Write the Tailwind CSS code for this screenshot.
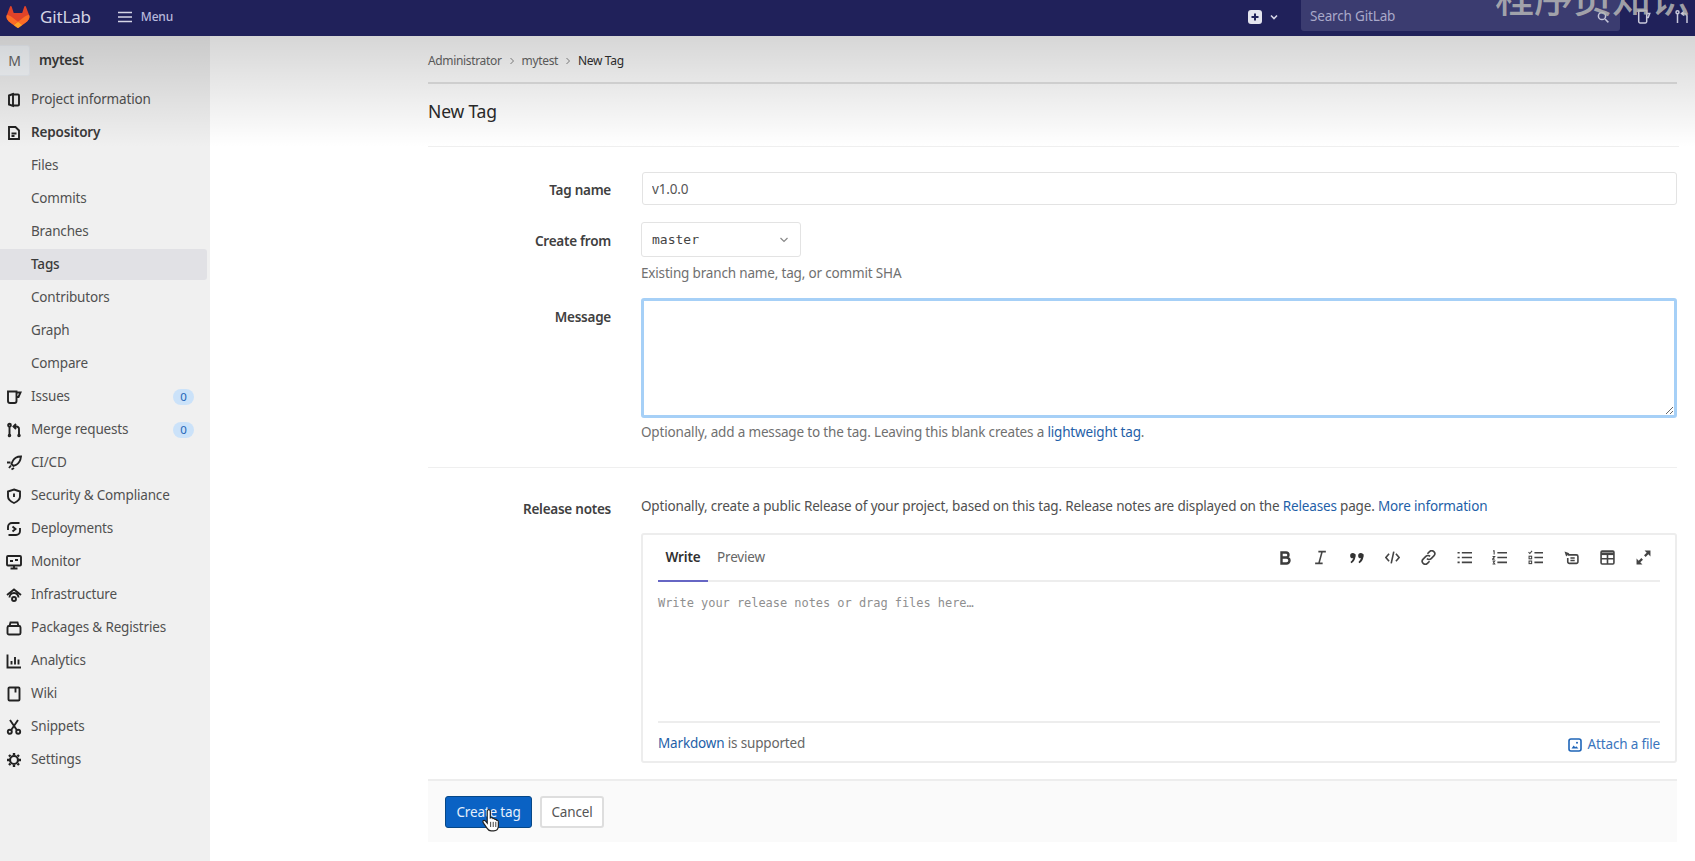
<!DOCTYPE html>
<html lang="en">
<head>
  <meta charset="UTF-8" />
  <title>New Tag · mytest · GitLab</title>
  <script src="https://cdn.jsdelivr.net/npm/@tailwindcss/browser@4"></script>
</head>
<body class="relative h-[861px] overflow-hidden bg-white font-['Noto_Sans',sans-serif] text-[13.5px] tracking-[-0.17px] text-[#505050]">

  <!-- top bar -->
  <header class="flex h-[36px] items-center bg-[#20215a] pb-[3px] pr-[5px] text-[#c6c6e0]">
    <svg class="ml-[6px] h-[22px] w-[24px]" viewBox="0 0 25 24">
      <path d="m24.507 9.5-.034-.09L21.082.562a.896.896 0 0 0-1.694.091l-2.29 7.01H7.825L5.535.653a.898.898 0 0 0-1.694-.09L.451 9.411.416 9.5a6.297 6.297 0 0 0 2.09 7.278l.012.01.03.022 5.16 3.867 2.56 1.935 1.554 1.176a1.051 1.051 0 0 0 1.268 0l1.555-1.176 2.56-1.935 5.197-3.89.014-.01A6.297 6.297 0 0 0 24.507 9.5Z" fill="#E24329"/>
      <path d="m24.507 9.5-.034-.09a11.44 11.44 0 0 0-4.56 2.051l-7.447 5.632 4.742 3.584 5.197-3.89.014-.01A6.297 6.297 0 0 0 24.507 9.5Z" fill="#FC6D26"/>
      <path d="m7.707 20.677 2.56 1.935 1.555 1.176a1.051 1.051 0 0 0 1.268 0l1.555-1.176 2.56-1.935-4.743-3.584-4.755 3.584Z" fill="#FCA326"/>
      <path d="M5.01 11.461a11.43 11.43 0 0 0-4.56-2.05L.416 9.5a6.297 6.297 0 0 0 2.09 7.278l.012.01.03.022 5.16 3.867 4.745-3.584-7.444-5.632Z" fill="#FC6D26"/>
    </svg>
    <span class="ml-[10px] text-[17px] leading-none text-[#d4d4e4]">GitLab</span>
    <svg class="ml-[27px] h-[14px] w-[14px]" viewBox="0 0 14 14" fill="none" stroke="#d6d6e6" stroke-width="1.4"><path d="M0 2.5h14M0 7h14M0 11.5h14"/></svg>
    <span class="ml-[9px] text-[12px] font-medium text-[#b9b9dc]">Menu</span>

    <div class="ml-auto flex h-full items-center">
      <svg class="h-[14px] w-[14px]" viewBox="0 0 14 14"><rect width="14" height="14" rx="3" fill="#e4e4ee"/><path d="M7 3.500v7M3.500 7h7" stroke="#20215a" stroke-width="2"/></svg>
      <svg class="ml-[8px] h-[8px] w-[8px]" viewBox="0 0 8 8" fill="none" stroke="#d6d6e6" stroke-width="1.6"><path d="M1 2.500l3 3 3-3"/></svg>
      <div class="ml-[23px] flex h-[31px] w-[319px] items-center justify-between self-start rounded-b-[3px] bg-[#3b3c70] pl-[9px] pr-[11px] pt-[2px] text-[13.5px] text-[#a9a9c9]">
        <span>Search GitLab</span>
        <svg class="h-[12px] w-[12px]" viewBox="0 0 12 12" fill="none" stroke="#c4c4d8" stroke-width="1.5"><circle cx="5" cy="5" r="3.600"/><path d="M8 8l3.400 3.400"/></svg>
      </div>
      <svg class="ml-[16px] h-[16px] w-[16px]" viewBox="0 0 16 16" fill="none" stroke="#c8c8da" stroke-width="1.5"><path d="M2.700 1.500v11a1.500 1.500 0 0 0 1.500 1.500h5a1.500 1.500 0 0 0 1.500-1.500v-11zM10.700 4.500h3l-1.500 4h-1.500"/></svg>
      <svg class="ml-[22px] h-[16px] w-[16px] shrink-0" viewBox="0 0 16 16" fill="none" stroke="#c8c8da" stroke-width="1.5"><path d="M3.500 5v9M13 8v6M10 2.500L7.500 4.500 10 6.500M7.500 4.500h3A2.500 2.500 0 0 1 13 7v1"/><circle cx="3.500" cy="3.200" r="1.500"/></svg>
    </div>
  </header>

  <!-- soft grey fade lying over the top of the page -->
  <div class="pointer-events-none absolute inset-x-0 top-[36px] z-10 h-[111px] bg-linear-to-b from-black/16 to-transparent"></div>

  <!-- watermark -->
  <div class="absolute left-[1495px] top-[-29px] z-20 whitespace-nowrap font-['Noto_Sans_CJK_SC',sans-serif] text-[39px] font-medium leading-[48px] tracking-normal text-[#b5b5b5]/85">程序员知识</div>

  <div class="flex h-[825px]">
    <!-- sidebar -->
    <aside class="w-[210px] shrink-0 bg-[#f0f0f0] pt-[9px]">
      <div class="flex h-[31px] items-center">
        <div class="flex h-[31px] w-[30px] items-center justify-center rounded-r-[3px] border border-l-0 border-[#f0f4f9] bg-[#f9fcff] text-[14px] text-[#666]">M</div>
        <span class="ml-[9px] text-[13.5px] font-semibold text-[#3a3a3a]">mytest</span>
      </div>
      <nav class="mt-[7px] w-[207px]">
        <a class="flex h-[33px] items-center">
          <svg class="ml-[6px] h-[16px] w-[16px] shrink-0" viewBox="0 0 16 16" fill="none" stroke="#222" stroke-width="1.9"><path d="M7 2L3 3.500v9L7 14zM7 2.500h5a1 1 0 0 1 1 1v9a1 1 0 0 1-1 1H7"/></svg>
          <span class="ml-[9px]">Project information</span>
        </a>
        <a class="flex h-[33px] items-center font-semibold text-[#3a3a3a]">
          <svg class="ml-[6px] h-[16px] w-[16px] shrink-0" viewBox="0 0 16 16" fill="none" stroke="#222" stroke-width="1.9"><path d="M3 2h6.500L13 5.500V14H3zM5.500 8.500h5M5.500 11h3"/></svg>
          <span class="ml-[9px]">Repository</span>
        </a>
        <a class="flex h-[33px] items-center pl-[31px]">Files</a>
        <a class="flex h-[33px] items-center pl-[31px]">Commits</a>
        <a class="flex h-[33px] items-center pl-[31px]">Branches</a>
        <a class="my-px flex h-[31px] items-center rounded-r-[3px] bg-[#e1e1e5] pl-[31px] font-medium text-[#3a3a3a]">Tags</a>
        <a class="flex h-[33px] items-center pl-[31px]">Contributors</a>
        <a class="flex h-[33px] items-center pl-[31px]">Graph</a>
        <a class="flex h-[33px] items-center pl-[31px]">Compare</a>
        <a class="flex h-[33px] items-center">
          <svg class="ml-[6px] h-[16px] w-[16px] shrink-0" viewBox="0 0 16 16" fill="none" stroke="#222" stroke-width="1.9"><path d="M2 2.500h8.500V12a2 2 0 0 1-2 2H4a2 2 0 0 1-2-2zM10.500 3.500h4l-2 4.500h-2"/></svg>
          <span class="ml-[9px]">Issues</span>
          <span class="ml-auto mr-[13px] flex h-[16px] w-[21px] items-center justify-center rounded-full bg-[#cbe2f9] text-[11.5px] text-[#1f65b8]">0</span>
        </a>
        <a class="flex h-[33px] items-center">
          <svg class="ml-[6px] h-[16px] w-[16px] shrink-0" viewBox="0 0 16 16" fill="none" stroke="#222" stroke-width="1.9"><path d="M3.500 5v8M13 8v5M10 2L7.500 4.500 10 7M7.500 4.500h3A2.500 2.500 0 0 1 13 7v1"/><circle cx="3.500" cy="3.200" r="1.400"/><circle cx="3.500" cy="13.500" r="0.800"/><circle cx="13" cy="13.500" r="0.800"/></svg>
          <span class="ml-[9px]">Merge requests</span>
          <span class="ml-auto mr-[13px] flex h-[16px] w-[21px] items-center justify-center rounded-full bg-[#cbe2f9] text-[11.5px] text-[#1f65b8]">0</span>
        </a>
        <a class="flex h-[33px] items-center">
          <svg class="ml-[6px] h-[16px] w-[16px] shrink-0" viewBox="0 0 16 16" fill="none" stroke="#222" stroke-width="1.9"><path d="M15 1.500c-4 0-7 1.500-8.500 5L5.500 9l2 2 2.500-1c3-1.500 4.500-4.500 5-8.500zM1 7.500h3.500M5.500 14.500l2.500-1.500M5 10.500L3 13"/></svg>
          <span class="ml-[9px]">CI/CD</span>
        </a>
        <a class="flex h-[33px] items-center">
          <svg class="ml-[6px] h-[16px] w-[16px] shrink-0" viewBox="0 0 16 16" fill="none" stroke="#222" stroke-width="1.9"><path d="M8 1.500l6 2v5c0 3-2.500 5-6 6.500-3.500-1.500-6-3.500-6-6.500v-5zM8 5.500v3.500"/></svg>
          <span class="ml-[9px]">Security &amp; Compliance</span>
        </a>
        <a class="flex h-[33px] items-center">
          <svg class="ml-[6px] h-[16px] w-[16px] shrink-0" viewBox="0 0 16 16" fill="none" stroke="#222" stroke-width="1.9"><path d="M2 9V6a4 4 0 0 1 4-4h7.500M14 7v3a4 4 0 0 1-4 4H2.500M6.500 5.500L9.500 8l-3 2.500"/></svg>
          <span class="ml-[9px]">Deployments</span>
        </a>
        <a class="flex h-[33px] items-center">
          <svg class="ml-[6px] h-[16px] w-[16px] shrink-0" viewBox="0 0 16 16" fill="none" stroke="#222" stroke-width="1.9"><rect x="1" y="2" width="14" height="9.500" rx="1"/><path d="M4.500 14.500h7M8 11.500v3M4 7h3M9 6h3"/></svg>
          <span class="ml-[9px]">Monitor</span>
        </a>
        <a class="flex h-[33px] items-center">
          <svg class="ml-[6px] h-[16px] w-[16px] shrink-0" viewBox="0 0 16 16" fill="none" stroke="#222" stroke-width="1.9"><path d="M1 8l7-5.500L15 8M3.500 10.500a4.500 4.500 0 0 1 9 0"/><circle cx="8" cy="12" r="2"/></svg>
          <span class="ml-[9px]">Infrastructure</span>
        </a>
        <a class="flex h-[33px] items-center">
          <svg class="ml-[6px] h-[16px] w-[16px] shrink-0" viewBox="0 0 16 16" fill="none" stroke="#222" stroke-width="1.9"><rect x="1.500" y="6" width="13" height="8.500" rx="1.500"/><path d="M3.500 6l1-3.500h7l1 3.500"/></svg>
          <span class="ml-[9px]">Packages &amp; Registries</span>
        </a>
        <a class="flex h-[33px] items-center">
          <svg class="ml-[6px] h-[16px] w-[16px] shrink-0" viewBox="0 0 16 16" fill="none" stroke="#222" stroke-width="1.9"><path d="M1.500 1.500V14.500H15M5.500 8v3.500M9 4v7.500M12.500 6.500v5"/></svg>
          <span class="ml-[9px]">Analytics</span>
        </a>
        <a class="flex h-[33px] items-center">
          <svg class="ml-[6px] h-[16px] w-[16px] shrink-0" viewBox="0 0 16 16" fill="none" stroke="#222" stroke-width="1.9"><rect x="2.500" y="1.500" width="11" height="13" rx="1"/><path d="M9.500 1.500v5"/></svg>
          <span class="ml-[9px]">Wiki</span>
        </a>
        <a class="flex h-[33px] items-center">
          <svg class="ml-[6px] h-[16px] w-[16px] shrink-0" viewBox="0 0 16 16" fill="none" stroke="#222" stroke-width="1.9"><circle cx="3.800" cy="12.800" r="2"/><circle cx="12.200" cy="12.800" r="2"/><path d="M4 1l6.800 10M12 1L5.200 11"/></svg>
          <span class="ml-[9px]">Snippets</span>
        </a>
        <a class="flex h-[33px] items-center">
          <svg class="ml-[6px] h-[16px] w-[16px] shrink-0" viewBox="0 0 16 16" fill="none" stroke="#222" stroke-width="2.200"><circle cx="8" cy="8" r="4"/><path stroke-width="2.400" d="M8 1v2M8 13v2M1 8h2M13 8h2M3 3l1.400 1.400M11.600 11.600L13 13M3 13l1.400-1.400M11.600 4.400L13 3"/></svg>
          <span class="ml-[9px]">Settings</span>
        </a>
      </nav>
    </aside>

    <!-- page -->
    <main class="min-w-0 flex-1 pl-[218px] pr-[18px]">
      <div class="flex h-[48px] items-center border-b-2 border-[#e3e3e3] pt-[4px] text-[12px] tracking-[-0.34px] text-[#666]">
        <span>Administrator</span>
        <svg class="mx-[6px] h-[8px] w-[8px]" viewBox="0 0 8 8" fill="none" stroke="#888" stroke-width="1"><path d="M2.500 1l3 3-3 3"/></svg>
        <span>mytest</span>
        <svg class="mx-[6px] h-[8px] w-[8px]" viewBox="0 0 8 8" fill="none" stroke="#888" stroke-width="1"><path d="M2.500 1l3 3-3 3"/></svg>
        <span class="text-[#303030]">New Tag</span>
      </div>
      <div class="mr-[-2px] flex h-[63px] items-center border-b border-[#efefef] pb-[8px]">
        <h1 class="text-[17.5px] font-normal text-[#2a2a2a]">New Tag</h1>
      </div>

      <form class="grid grid-cols-[183px_1fr] gap-x-[30px] pt-[25px]">
        <label class="flex h-[33px] items-center justify-end pt-[4px] font-semibold tracking-[-0.25px] text-[#404040]">Tag name</label>
        <input class="ml-px h-[33px] rounded-[3px] border border-[#e3e3e3] px-[9px] text-[13.5px] text-[#555] outline-none" value="v1.0.0" />

        <label class="mt-[17px] flex h-[35px] items-center justify-end pt-[3px] font-semibold tracking-[-0.25px] text-[#404040]">Create from</label>
        <div class="mt-[17px]">
          <div class="flex h-[35px] w-[160px] items-center justify-between rounded-[3px] border border-[#e3e3e3] pl-[10px] pr-[11px] font-['DejaVu_Sans_Mono',monospace] text-[13px] tracking-normal text-[#444]">
            <span>master</span>
            <svg class="h-[10px] w-[10px]" viewBox="0 0 10 10" fill="none" stroke="#888" stroke-width="1.200"><path d="M1.500 3l3.500 3.500L8.500 3"/></svg>
          </div>
          <p class="mt-[6px] leading-[20px] text-[#707070]">Existing branch name, tag, or commit SHA</p>
        </div>

        <label class="mt-[15px] flex h-[38px] items-center justify-end font-semibold tracking-[-0.25px] text-[#404040]">Message</label>
        <div class="mt-[15px]">
          <textarea class="block h-[120px] w-full resize-y rounded-[3px] border-[3px] border-[#a6d0f7] outline-none"></textarea>
          <p class="mt-[4px] leading-[20px] text-[#707070]">Optionally, add a message to the tag. Leaving this blank creates a <a class="text-[#1f5fa8]">lightweight tag</a>.</p>
        </div>

        <div class="col-span-2 mt-[25px] border-b border-[#efefef]"></div>

        <label class="mt-[31px] flex h-[20px] items-center justify-end font-semibold tracking-[-0.25px] text-[#404040]">Release notes</label>
        <div class="mt-[28px]">
          <p class="leading-[20px] text-[#505050]">Optionally, create a public Release of your project, based on this tag. Release notes are displayed on the <a class="text-[#1f5fa8]">Releases</a> page. <a class="text-[#1f5fa8]">More information</a></p>

          <div class="mt-[17px] h-[230px] rounded-[3px] border-2 border-[#ededed] px-[15px]">
            <div class="flex h-[47px] items-center justify-between border-b-2 border-[#ededed]">
              <div class="flex h-full">
                <span class="-mb-[2px] flex h-[47px] w-[50px] items-center justify-center border-b-2 border-[#6666c4] font-semibold text-[#303030]">Write</span>
                <span class="ml-[9px] flex items-center text-[#666]">Preview</span>
              </div>
              <div class="-mr-[1px] flex items-center">
                <span class="flex w-[35.8px] justify-center"><svg class="h-[14px] w-[14px]" viewBox="0 0 14 14" fill="none" stroke="#3c3c3c" stroke-width="2.400"><path d="M3.500 1.500h4.500a2.500 2.500 0 0 1 0 5H3.500zM3.500 6.500h5a2.700 2.700 0 0 1 0 6h-5z"/></svg></span>
                <span class="flex w-[35.8px] justify-center"><svg class="h-[15px] w-[15px]" viewBox="0 0 14 14" fill="none" stroke="#444" stroke-width="1.500"><path d="M5 1.500h7M2 12.500h7M8.500 1.500l-3 11"/></svg></span>
                <span class="flex w-[35.8px] justify-center"><svg class="h-[16px] w-[16px]" viewBox="0 0 14 14" fill="#333"><circle cx="3.300" cy="5" r="2.300"/><circle cx="10.300" cy="5" r="2.300"/><path d="M4.100 3.500h1.500c.4 4-1 6.500-3.500 8l-.8-1.100C3.300 9 4.400 7 4.100 3.500zM11.100 3.500h1.500c.4 4-1 6.500-3.500 8l-.8-1.100c1.500-1.400 3-3.400 2.800-6.900z"/></svg></span>
                <span class="flex w-[35.8px] justify-center"><svg class="h-[15px] w-[15px]" viewBox="0 0 14 14" fill="none" stroke="#444" stroke-width="1.500"><path d="M3.800 3.500L.8 7l3 3.500M10.200 3.500l3 3.500-3 3.500M8.200 1.500l-2.400 11"/></svg></span>
                <span class="flex w-[35.8px] justify-center"><svg class="h-[15px] w-[15px]" viewBox="0 0 14 14" fill="none" stroke="#444" stroke-width="1.500"><path d="M6 3.500l2-2a2.800 2.800 0 0 1 4 4l-2.500 2.500a2.800 2.800 0 0 1-4 0M8 10.500l-2 2a2.800 2.800 0 0 1-4-4L4.500 6a2.800 2.800 0 0 1 4 0"/></svg></span>
                <span class="flex w-[35.8px] justify-center"><svg class="h-[15px] w-[15px]" viewBox="0 0 14 14" fill="none" stroke="#444" stroke-width="1.500"><path d="M4.500 2.500H14M4.500 7H14M4.500 11.500H14M.5 2.500h2M.5 7h2M.5 11.500h2"/></svg></span>
                <span class="flex w-[35.8px] justify-center"><svg class="h-[15px] w-[15px]" viewBox="0 0 14 14" fill="none" stroke="#444" stroke-width="1.500"><path d="M5 2.500h9M5 7h9M5 11.500h9"/><path stroke-width="1" d="M1 .8h1v3.400M.5 6h2L.5 8.500h2M.5 10.200h2L1.500 11.500l1 1.500h-2"/></svg></span>
                <span class="flex w-[35.8px] justify-center"><svg class="h-[15px] w-[15px]" viewBox="0 0 14 14" fill="none" stroke="#444" stroke-width="1.500"><path d="M6 2.500h8M6 7h8M6 11.500h8"/><path stroke-width="1" d="M.5 2l1.200 1.300L3.800.8"/><rect x="1" y="5.800" width="2.400" height="2.400" stroke-width="1"/><rect x="1" y="10.300" width="2.400" height="2.400" stroke-width="1"/></svg></span>
                <span class="flex w-[35.8px] justify-center"><svg class="h-[15px] w-[15px]" viewBox="0 0 14 14" fill="none" stroke="#444" stroke-width="1.500"><path d="M3.500 4.500h8a1.500 1.500 0 0 1 1.500 1.500v5a1.500 1.500 0 0 1-1.500 1.500H5A1.500 1.500 0 0 1 3.500 11V7.500M6 7.500h4M6 9.800h4"/><path fill="#444" stroke="none" d="M.5 1.500l4.500 1.500-3 3z"/></svg></span>
                <span class="flex w-[35.8px] justify-center"><svg class="h-[15px] w-[15px]" viewBox="0 0 14 14" fill="none" stroke="#444" stroke-width="1.500"><rect x="1" y="1" width="12" height="12" rx="1"/><path stroke-width="2.500" d="M1 3.500h12"/><path d="M1 8.200h12M7 4v9"/></svg></span>
                <span class="flex w-[35.8px] justify-center"><svg class="h-[15px] w-[15px]" viewBox="0 0 14 14" fill="#444"><path d="M8 .5h5.500V6L11.500 4 9 6.500 7.500 5 10 2.500zM6 13.500H.5V8l2 2L5 7.500 6.500 9 4 11.500z"/></svg></span>
              </div>
            </div>
            <div class="h-[141px] border-b-2 border-[#ededed] pt-[12px] font-['DejaVu_Sans_Mono',monospace] text-[12px] leading-[18px] tracking-[-0.05px] text-[#8f8f8f]">Write your release notes or drag files here…</div>
            <div class="flex h-[38px] items-center justify-between pt-[2px]">
              <span class="text-[#666]"><a class="text-[#1f5fa8]">Markdown</a> is supported</span>
              <a class="flex items-center pt-[3px] text-[#3a75bd]">
                <svg class="mr-[6px] h-[14px] w-[14px]" viewBox="0 0 14 14" fill="none" stroke="#1f65b8" stroke-width="1.600"><rect x="1" y="1" width="12" height="12" rx="2"/><path fill="#1f65b8" stroke="none" d="M3.500 10.500l2.200-3 1.500 1.800 1-1 2.300 2.200z"/><circle cx="9" cy="4.800" r="1" fill="#1f65b8" stroke="none"/></svg>
                Attach a file
              </a>
            </div>
          </div>
        </div>

        <div class="col-span-2 mt-[16px] flex h-[63px] items-start gap-[8px] border-t-2 border-[#ededed] bg-[#fafafa] pl-[17px] pt-[15px]">
          <button type="button" class="h-[32px] w-[87px] rounded-[3px] border border-[#064787] bg-[#0a62c4] text-[13.5px] text-[#e6f0fb]">Create tag</button>
          <button type="button" class="h-[32px] w-[64px] rounded-[3px] border-2 border-[#dedede] bg-white text-[13.5px] text-[#555]">Cancel</button>
        </div>
      </form>
    </main>
  </div>

  <!-- mouse pointer over the button -->
  <svg class="absolute left-[482px] top-[809px] z-20 h-[24px] w-[19px]" viewBox="0 0 22 28"><path d="M6 2.500a1.800 1.800 0 0 1 3.600 0v8l1.200-.3c1-.2 1.700.3 2 1 1-.3 1.800 0 2.200.9 1-.3 1.900.2 2.200 1.100 1-.1 1.800.6 1.800 1.700v5c0 3-2 5.600-5.500 5.600h-3c-2.300 0-3.600-1.200-4.800-3.200L1.300 16c-.7-1-.4-2 .4-2.500.8-.5 1.800-.2 2.400.6L6 16.500z" fill="#fff" stroke="#222" stroke-width="1.400"/><path d="M10 15v6M13 15v6M16 15v6" stroke="#222" stroke-width="1"/></svg>

</body>
</html>
